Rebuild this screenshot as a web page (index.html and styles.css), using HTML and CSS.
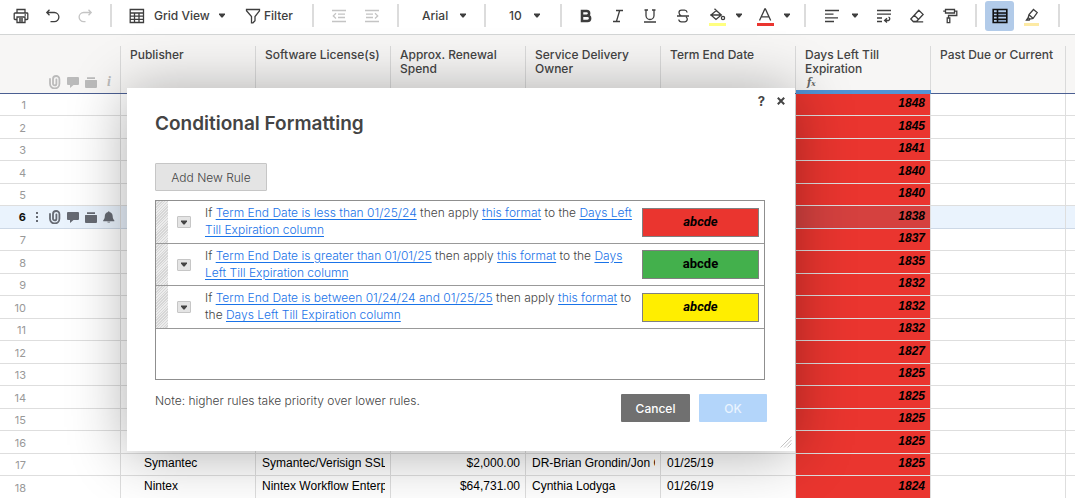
FILE: index.html
```html
<!DOCTYPE html>
<html lang="en">
<head>
<meta charset="utf-8">
<title>License renewals</title>
<link rel="stylesheet" href="styles.css">
</head>
<body>
<svg class="defs" aria-hidden="true">
  <symbol id="caret" viewBox="0 0 6 5"><path d="M0 0.500h6v1L3.600 4.500H2.400L0 1.500z" fill="currentColor"/></symbol>
  <symbol id="clip" viewBox="0 0 14 14"><path d="M2 4v4.800a4.700 4.700 0 0 0 9.400 0V4.200a3.200 3.200 0 0 0-6.400 0v4.500a1.700 1.700 0 0 0 3.400 0V4.300" fill="none" stroke="currentColor" stroke-width="1.800" stroke-linecap="round"/></symbol>
  <symbol id="comment" viewBox="0 0 14 14"><path d="M2 2h10a1 1 0 0 1 1 1v6a1 1 0 0 1-1 1H7.500L4 13V10H2a1 1 0 0 1-1-1V3a1 1 0 0 1 1-1z" fill="currentColor"/></symbol>
  <symbol id="stack" viewBox="0 0 14 14"><path d="M3 2.300h8V4H3zM1.500 5h11a.6.6 0 0 1 .5.600V12a1 1 0 0 1-1 1H2a1 1 0 0 1-1-1V5.600a.6.6 0 0 1 .5-.6z" fill="currentColor"/></symbol>
  <symbol id="bell" viewBox="0 0 14 14"><path d="M6.200 1.200h1.100v.9c2.200.4 3.400 2 3.400 4.200 0 2 .5 3 1.600 3.900v1H1.200v-1c1.100-.9 1.600-1.900 1.600-3.900 0-2.200 1.200-3.800 3.400-4.200zM5.200 11.700h3.100a1.600 1.200 0 0 1-3.100 0z" fill="currentColor"/></symbol>
</svg>

<div class="toolbar" role="toolbar" aria-label="Sheet tools">
  <button class="tool" aria-label="Print"><svg class="icon" viewBox="0 0 16 16"><path d="M4 5V1.500h8V5M4 11.500H2a.8.8 0 0 1-.8-.8V5.800A.8.8 0 0 1 2 5h12a.8.800 0 0 1 .8.800v4.900a.8.8 0 0 1-.8.8h-2M4 9h8v5.500H4zM6 11h4M6 12.800h4M11.500 7h1.500"/></svg></button>
  <button class="tool" aria-label="Undo"><svg class="icon" viewBox="0 0 16 16"><path d="M4.500 1.800L1.800 4.500l2.700 2.800M2 4.500h7.300a4.600 4.600 0 0 1 0 9.200H5.500"/></svg></button>
  <button class="tool faint" aria-label="Redo" disabled><svg class="icon" viewBox="0 0 16 16"><path d="M11.500 1.800l2.700 2.700-2.700 2.800M14 4.500H6.700a4.600 4.600 0 0 0 0 9.200h1.800"/></svg></button>
  <span class="sep"></span>
  <button class="tool view"><svg class="icon" viewBox="0 0 16 16"><path d="M1.200 1.500h13.300v13H1.200zM1.200 5h13.300M1.200 8.200h13.300M1.200 11.300h13.300M5.500 5v9.500M10 5v9.500"/></svg><span>Grid View</span><svg class="caret"><use href="#caret"/></svg></button>
  <button class="tool filter"><svg class="icon" viewBox="0 0 16 16"><path d="M1.500 1.500h13v1.300L10 8.500v4.300l-2 2H6.500V8.500L1.500 2.800z"/></svg><span>Filter</span></button>
  <span class="sep"></span>
  <button class="tool wide faint" aria-label="Outdent" disabled><svg class="icon" viewBox="0 0 16 16"><path d="M1 2.500h14M7 6.200h7M7 9.500h7M1 13.500h14M5 5.200L2.300 7.900 5 10.500"/></svg></button>
  <button class="tool wide faint" aria-label="Indent" disabled><svg class="icon" viewBox="0 0 16 16"><path d="M1 2.500h14M2 6.200h7M2 9.500h7M1 13.500h14M11 5.200l2.700 2.700L11 10.500"/></svg></button>
  <span class="sep"></span>
  <label class="picker family"><select aria-label="Font"><option>Arial</option></select><svg class="caret"><use href="#caret"/></svg></label>
  <span class="sep"></span>
  <label class="picker size"><select aria-label="Font size"><option>10</option></select><svg class="caret"><use href="#caret"/></svg></label>
  <span class="sep"></span>
  <button class="tool" aria-label="Bold"><svg class="icon heavy" viewBox="0 0 16 16"><path d="M4 3h4.800a2.300 2.300 0 0 1 0 4.700H4zM4 7.700h5.500a2.600 2.600 0 0 1 0 5.300H4z"/></svg></button>
  <button class="tool" aria-label="Italic"><svg class="icon" viewBox="0 0 16 16"><path d="M6 2.500h7M3 13.500h7M9.700 2.500l-3.300 11"/></svg></button>
  <button class="tool" aria-label="Underline"><svg class="icon" viewBox="0 0 16 16"><path d="M2.500 2h3.500M10 2h3.500M4 2v5.500a4 4 0 0 0 8 0V2M2 14h12"/></svg></button>
  <button class="tool wide" aria-label="Strikethrough"><svg class="icon" viewBox="0 0 16 16"><path d="M12 4.500v-.300A2.500 2.500 0 0 0 9.500 2.200h-3A2.500 2.500 0 0 0 4 4.700C4 6.500 5.200 7.300 6.500 8M2 8h12M11 9c.800.500 1.300 1.100 1.300 2a2.700 2.700 0 0 1-2.700 2.800H6.400a2.600 2.600 0 0 1-2.600-2.300"/></svg></button>
  <button class="tool split" aria-label="Fill color"><span class="inked"><svg class="ink" viewBox="0 0 17 14"><path d="M7.300 2.500L12.300 7 7 11.500 2 7zM5.500.8l3.700 3.500M1.200 7h11.500"/><circle cx="14" cy="10" r="1.600"/></svg><span class="bar yellow"></span></span><svg class="caret"><use href="#caret"/></svg></button>
  <button class="tool split" aria-label="Text color"><span class="inked"><svg class="ink" viewBox="0 0 17 14"><path d="M2.500 12.500L7.800 1h.6l5.300 11.500M4.500 8.800h7.300"/></svg><span class="bar red"></span></span><svg class="caret"><use href="#caret"/></svg></button>
  <span class="sep"></span>
  <button class="tool align" aria-label="Align"><svg class="icon" viewBox="0 0 16 16"><path d="M1 2.500h14M1 6.200h8.500M1 9.800h13M1 13.500h9"/></svg><svg class="caret"><use href="#caret"/></svg></button>
  <button class="tool wide" aria-label="Wrap text"><svg class="icon" viewBox="0 0 16 16"><path d="M1 2.500h14M1 6.200h14M1 10h5M1 13.500h5M11 10.300L8.600 12.500l2.400 2M9 12.500h3.500a1.700 1.700 0 0 0 0-3.300"/></svg></button>
  <button class="tool wide" aria-label="Clear format"><svg class="icon" viewBox="0 0 16 16"><path d="M9.800 2.200l4.300 4.200-6.600 7.100H4.200L1.800 11zM5.200 7.300l4.500 4.200M4.200 13.800h10"/></svg></button>
  <button class="tool wide" aria-label="Format painter"><svg class="icon" viewBox="0 0 16 16"><path d="M3.500 1.500h9V5h-9zM3.500 3.200H1.200M12.500 3.200h2.300V7.500H6.500V10M5.200 10h2.600v4.700H5.200z"/></svg></button>
  <span class="sep"></span>
  <button class="tool active" aria-label="Conditional formatting"><svg class="icon" viewBox="0 0 16 16"><path d="M5.500 5h9.500v3H5.500zM5.500 11h9.500v3.500H5.500z" fill="#8ba5c6" stroke="none"/><path d="M1.200 1.500h13.600v13H1.200zM1.200 5h13.600M1.200 8h13.600M1.200 11.300h13.600M5.500 1.500v13" stroke-width="1.600"/></svg></button>
  <button class="tool marker" aria-label="Highlight changes"><span class="inked"><svg class="ink" viewBox="0 0 17 14"><path d="M10.500 1.500l3.700 3-4.200 6-3.200.6-1.600-1.600.8-3zM6.200 7l3.500 3M5.300 9.500L3.500 12h2.800l.6-.8"/></svg><span class="bar pale"></span></span></button>
  <span class="sep"></span>
</div>

<main class="sheet">
  <table class="grid">
    <colgroup><col class="c-num"><col class="c"><col class="c"><col class="c"><col class="c"><col class="c"><col class="c"><col class="c"><col></colgroup>
    <thead>
      <tr>
        <th><div class="head marks"><svg class="mark"><use href="#clip"/></svg><svg class="mark"><use href="#comment"/></svg><svg class="mark"><use href="#stack"/></svg><span class="info">i</span></div></th>
        <th scope="col"><div class="head">Publisher</div></th>
        <th scope="col"><div class="head">Software License(s)</div></th>
        <th scope="col"><div class="head">Approx. Renewal Spend</div></th>
        <th scope="col"><div class="head">Service Delivery Owner</div></th>
        <th scope="col"><div class="head">Term End Date</div></th>
        <th scope="col" class="chosen"><div class="head">Days Left Till Expiration<span class="fx">f<small>x</small></span></div></th>
        <th scope="col"><div class="head">Past Due or Current</div></th>
        <th></th>
      </tr>
    </thead>
    <tbody>
      <tr><th scope="row">1</th><td></td><td></td><td></td><td></td><td></td><td class="days">1848</td><td></td><td></td></tr>
      <tr><th scope="row">2</th><td></td><td></td><td></td><td></td><td></td><td class="days">1845</td><td></td><td></td></tr>
      <tr><th scope="row">3</th><td></td><td></td><td></td><td></td><td></td><td class="days">1841</td><td></td><td></td></tr>
      <tr><th scope="row">4</th><td></td><td></td><td></td><td></td><td></td><td class="days">1840</td><td></td><td></td></tr>
      <tr><th scope="row">5</th><td></td><td></td><td></td><td></td><td></td><td class="days">1840</td><td></td><td></td></tr>
      <tr class="current"><th scope="row"><div class="rowtools"><span class="num">6</span><span class="dots"><i></i><i></i><i></i></span><span class="marklist"><svg class="mark"><use href="#clip"/></svg><svg class="mark"><use href="#comment"/></svg><svg class="mark"><use href="#stack"/></svg><svg class="mark"><use href="#bell"/></svg></span></div></th><td></td><td></td><td></td><td></td><td></td><td class="days">1838</td><td></td><td></td></tr>
      <tr><th scope="row">7</th><td></td><td></td><td></td><td></td><td></td><td class="days">1837</td><td></td><td></td></tr>
      <tr><th scope="row">8</th><td></td><td></td><td></td><td></td><td></td><td class="days">1835</td><td></td><td></td></tr>
      <tr><th scope="row">9</th><td></td><td></td><td></td><td></td><td></td><td class="days">1832</td><td></td><td></td></tr>
      <tr><th scope="row">10</th><td></td><td></td><td></td><td></td><td></td><td class="days">1832</td><td></td><td></td></tr>
      <tr><th scope="row">11</th><td></td><td></td><td></td><td></td><td></td><td class="days">1832</td><td></td><td></td></tr>
      <tr><th scope="row">12</th><td></td><td></td><td></td><td></td><td></td><td class="days">1827</td><td></td><td></td></tr>
      <tr><th scope="row">13</th><td></td><td></td><td></td><td></td><td></td><td class="days">1825</td><td></td><td></td></tr>
      <tr><th scope="row">14</th><td></td><td></td><td></td><td></td><td></td><td class="days">1825</td><td></td><td></td></tr>
      <tr><th scope="row">15</th><td></td><td></td><td></td><td></td><td></td><td class="days">1825</td><td></td><td></td></tr>
      <tr><th scope="row">16</th><td></td><td></td><td></td><td></td><td></td><td class="days">1825</td><td></td><td></td></tr>
      <tr><th scope="row">17</th><td class="publisher">Symantec</td><td><div class="cut">Symantec/Verisign SSL</div></td><td class="money">$2,000.00</td><td><div class="cut">DR-Brian Grondin/Jon Gray</div></td><td>01/25/19</td><td class="days">1825</td><td></td><td></td></tr>
      <tr><th scope="row">18</th><td class="publisher">Nintex</td><td><div class="cut">Nintex Workflow Enterprise</div></td><td class="money">$64,731.00</td><td>Cynthia Lodyga</td><td>01/26/19</td><td class="days">1824</td><td></td><td></td></tr>
    </tbody>
  </table>
</main>

<section class="dialog" role="dialog" aria-labelledby="dialog-title">
  <div class="corner">
    <button class="plain" aria-label="Help">?</button>
    <button class="plain" aria-label="Close"><svg class="close" viewBox="0 0 8 8"><path d="M.8.800l6.400 6.400M7.200.8L.8 7.200"/></svg></button>
  </div>
  <h1 class="title" id="dialog-title">Conditional Formatting</h1>
  <button class="add">Add New Rule</button>
  <ul class="rules">
    <li class="rule">
      <span class="grip"></span>
      <button class="more" aria-label="Rule menu"><svg class="caret"><use href="#caret"/></svg></button>
      <p class="words">If <a href="#">Term End Date is less than 01/25/24</a> then apply <a href="#">this format</a> to the <a href="#">Days Left Till Expiration column</a></p>
      <span class="swatch red slanted">abcde</span>
    </li>
    <li class="rule">
      <span class="grip"></span>
      <button class="more" aria-label="Rule menu"><svg class="caret"><use href="#caret"/></svg></button>
      <p class="words">If <a href="#">Term End Date is greater than 01/01/25</a> then apply <a href="#">this format</a> to the <a href="#">Days Left Till Expiration column</a></p>
      <span class="swatch green">abcde</span>
    </li>
    <li class="rule">
      <span class="grip"></span>
      <button class="more" aria-label="Rule menu"><svg class="caret"><use href="#caret"/></svg></button>
      <p class="words">If <a href="#">Term End Date is between 01/24/24 and 01/25/25</a> then apply <a href="#">this format</a> to the <a href="#">Days Left Till Expiration column</a></p>
      <span class="swatch gold slanted">abcde</span>
    </li>
  </ul>
  <div class="foot">
    <p class="note">Note: higher rules take priority over lower rules.</p>
    <button class="action cancel">Cancel</button>
    <button class="action ok" disabled>OK</button>
  </div>
  <svg class="resize" viewBox="0 0 12 12"><path d="M0.500 11.500l11-11M4 11.500L11.500 4M7.500 11.500l4-4"/></svg>
</section>
</body>
</html>
```
FILE: styles.css
```css
* { box-sizing: border-box; }
body {
  margin: 0;
  height: 100vh;
  overflow: hidden;
  background: #fff;
  color: #444;
  font-family: Inter, "Liberation Sans", sans-serif;
  font-size: 12px;
}
button, select { font: inherit; color: inherit; }
.defs { display: none; }

/* toolbar */
.toolbar {
  display: flex;
  align-items: center;
  height: 35px;
  padding: 0 0 3px 5px;
  border-bottom: 1px solid #d3d5d5;
  color: #3e3e3e;
  font-weight: 500;
}
.toolbar > * { flex: none; }
.tool {
  display: flex;
  align-items: center;
  justify-content: center;
  width: 32px;
  height: 30px;
  padding: 0;
  border: 0;
  background: none;
}
.tool.wide { width: 33px; }
.tool.faint { color: #c4c4c4; }
.tool.view { justify-content: flex-start; width: 117px; padding-left: 9px; gap: 9px; }
.tool.filter { justify-content: flex-start; width: 66px; padding-left: 8px; gap: 3px; }
.tool.split { justify-content: flex-start; width: 48px; padding-left: 10px; gap: 10px; }
.tool.align { justify-content: flex-start; width: 53px; padding-left: 10px; gap: 12px; }
.tool.active { width: 29px; border-radius: 3px; background: #b2cbe9; color: #111; }
.tool.marker { width: 35px; }
.sep { width: 2px; height: 23px; margin: 0 8px 0 9px; background: #dcdcdc; }
.icon { width: 16px; height: 16px; fill: none; stroke: currentColor; stroke-width: 1.3; }
.icon.heavy { stroke-width: 2.5; }
.caret { width: 6px; height: 5px; }
.inked { display: flex; flex-direction: column; align-items: center; gap: 1px; padding-top: 2px; }
.ink { width: 17px; height: 14px; fill: none; stroke: currentColor; stroke-width: 1.3; }
.bar { width: 17px; height: 3px; }
.bar.yellow { background: #ffff80; }
.bar.red { background: #ea352f; }
.bar.pale { width: 15px; background: #fdeaa4; }
.picker { display: flex; align-items: center; }
.picker select { padding: 0; border: 0; background: none; appearance: none; }
.family { width: 68px; padding-left: 15px; }
.family select { width: 38px; }
.size { width: 57px; padding-left: 15px; }
.size select { width: 25px; }

/* sheet */
.grid { width: 100%; table-layout: fixed; border-collapse: separate; border-spacing: 0; }
.c-num { width: 121px; }
.c { width: 135px; }
thead th {
  height: 59px;
  padding: 11px 0 0;
  border-bottom: 1px solid #4b5f92;
  background: #f7f6f5;
  vertical-align: top;
  text-align: left;
  font-weight: 500;
}
.head { height: 47px; padding: 2px 8px 0 9px; border-right: 1px solid #dadada; line-height: 14px; }
thead th.chosen { border-bottom: 4px solid #5294d5; }
.chosen .head { height: 44px; padding-right: 24px; }
.fx { display: block; padding-left: 2px; font: italic bold 11px/14px "DejaVu Serif Condensed", "DejaVu Serif", serif; color: #666; }
.fx small { font-size: 8px; }
.marks { display: flex; align-items: flex-end; gap: 4px; padding: 0 0 4px 48px; color: #bbb; }
.mark { flex: none; width: 14px; height: 14px; }
.info { width: 14px; text-align: center; font: italic bold 14px/14px "Liberation Serif", serif; }

tbody th, tbody td {
  height: 22px;
  padding: 0 5px 3px 6px;
  border-right: 1px solid #dedede;
  border-bottom: 1px solid #dedede;
  overflow: hidden;
  white-space: nowrap;
  color: #000;
  font: 12px/16px "Liberation Sans", sans-serif;
}
tbody tr:nth-child(even) > * { height: 23px; }
tbody th {
  padding: 1px 94px 0 0;
  text-align: right;
  color: #999;
  font: 11px/16px Inter, sans-serif;
}
tbody td:last-child, thead th:last-child { border-right: 0; }
.cut { overflow: hidden; }
tbody .publisher { padding-left: 23px; }
tbody .money { text-align: right; }
tbody .days { background: #ea352f; text-align: right; font-weight: bold; font-style: italic; }
.current > * { background: #eaf3fd; border-bottom-color: #cdd8e6; }
.current > .days { background: #d5413f; }
.current > th { padding: 0; }
.rowtools { display: flex; align-items: center; gap: 8px; color: #666a73; }
.num { width: 26px; color: #111; font-weight: 700; }
.dots { display: flex; flex-direction: column; align-items: center; gap: 2px; width: 6px; }
.dots i { width: 2px; height: 2px; background: currentColor; }
.marklist { display: flex; gap: 4px; }

/* dialog */
.dialog {
  position: absolute;
  left: 127px;
  top: 88px;
  width: 668px;
  padding: 25px 30px 29px 28px;
  background: #fff;
  box-shadow: 0 3px 55px rgba(0, 0, 0, 0.32);
  font-weight: 300;
}
.corner { position: absolute; top: 5px; right: 5px; display: flex; }
.plain { display: flex; align-items: center; justify-content: center; width: 19px; height: 16px; padding: 0; border: 0; background: none; font-size: 13px; font-weight: 700; }
.close { width: 8px; height: 8px; stroke: currentColor; stroke-width: 2; }
.title { margin: 0 0 28px; font-size: 19px; line-height: 22px; font-weight: 600; }
.add { display: block; width: 112px; height: 28px; margin-bottom: 9px; padding: 0; border: 1px solid #c6c6c6; border-radius: 1px; background: #e4e4e4; }
.rules { height: 180px; margin: 0; padding: 0; border: 1px solid #8f8f8f; list-style: none; }
.rule { display: flex; align-items: center; height: 43px; padding-right: 5px; border-bottom: 1px solid #999; }
.rule:nth-child(even) { height: 42px; }
.grip { flex: none; align-self: stretch; width: 12px; background: repeating-linear-gradient(135deg, #d6d6d6 0 1px, #ececec 1px 2px); }
.more { flex: none; display: flex; align-items: center; justify-content: center; width: 14px; height: 12px; margin: 0 14px 0 9px; padding: 0; border: 1px solid #c6c6c6; border-radius: 1px; background: #e4e4e4; }
.words { flex: 1; margin: 0 9px 2px 0; line-height: 17px; }
.words a { color: #1a73e8; text-underline-offset: 2px; }
.swatch { flex: none; width: 117px; height: 29px; border: 1px solid #808080; color: #000; text-align: center; font: bold 13px/26px Roboto, sans-serif; }
.swatch.red { background: #ea352f; }
.swatch.green { background: #43b04c; }
.swatch.gold { background: #ffee00; }
.slanted { font-style: italic; }
.foot { display: flex; align-items: flex-start; padding-top: 14px; }
.note { flex: 1; margin: 0; line-height: 14px; }
.action { width: 69px; height: 28px; padding: 0; border: 0; border-radius: 1px; color: #fff; font-weight: 500; }
.cancel { margin-right: 9px; background: #707070; }
.ok { width: 68px; margin-right: -2px; background: #b3d5fa; color: #e9f3fe; }
.resize { position: absolute; right: 3px; bottom: 3px; width: 12px; height: 12px; fill: none; stroke: #c4c4c4; }
```
